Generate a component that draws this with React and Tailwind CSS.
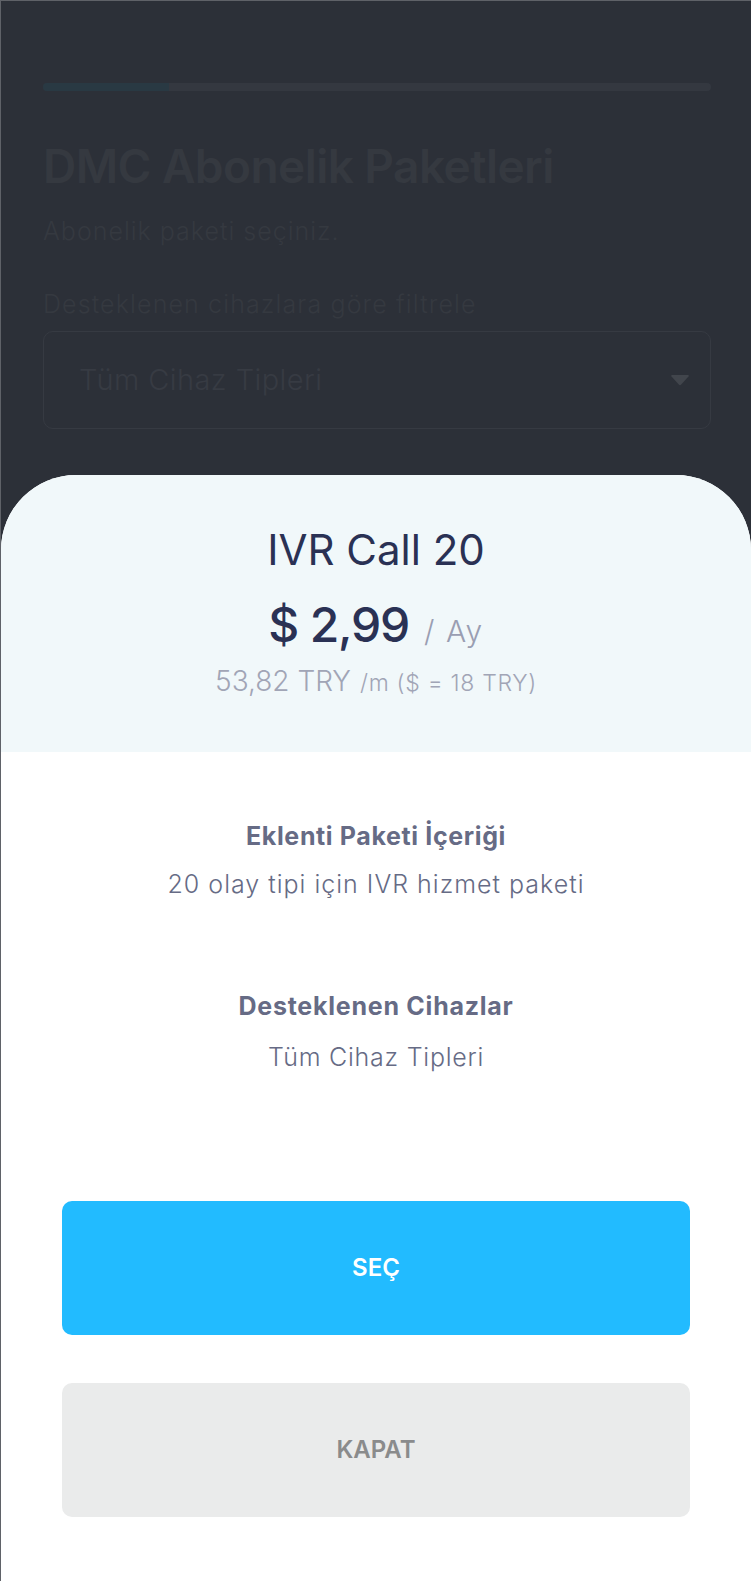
import React from 'react';

export default function App() {
  return (
    <div className="relative w-[751px] h-[1581px] overflow-hidden bg-[#2c3038] border-t border-l border-[#5f6268] font-['Inter',sans-serif]">
      {/* Background page (dimmed) */}
      <div className="px-[42px] pt-[82px]">
        <div className="h-[8px] w-[668px] rounded-full bg-[#343840] overflow-hidden">
          <div className="h-full w-[126px] bg-[#293943]" />
        </div>
        <h1 className="mt-[52px] text-[46px] leading-none font-semibold tracking-[-0.012em] text-[#353940]">DMC Abonelik Paketleri</h1>
        <p className="mt-[30px] text-[25px] leading-none font-light tracking-[0.04em] text-[#353940]">Abonelik paketi seçiniz.</p>
        <p className="mt-[48px] text-[25px] leading-none font-light tracking-[0.045em] text-[#353940]">Desteklenen cihazlara göre filtrele</p>
        <div className="mt-[14px] h-[98px] w-[668px] rounded-[10px] border border-[#363a42] flex items-center justify-between pl-[35px] pr-[20px]">
          <span className="text-[29px] font-light tracking-[0.015em] text-[#373b43]">Tüm Cihaz Tipleri</span>
          <svg width="20" height="12" viewBox="0 0 20 12">
            <path d="M2 1 L18 1 Q19.5 1 18.5 2.5 L11.2 10.5 Q10 11.8 8.8 10.5 L1.5 2.5 Q0.5 1 2 1 Z" fill="#41454c" />
          </svg>
        </div>
      </div>

      {/* Bottom sheet */}
      <div className="absolute left-0 right-0 top-[474px] bottom-0 rounded-t-[75px] overflow-hidden bg-white flex flex-col">
        <div className="h-[277px] bg-[#f1f8fa] flex flex-col items-center pt-[54px]">
          <h2 className="text-[42px] leading-none text-[#2a3154]">IVR Call 20</h2>
          <div className="mt-[30px] flex items-baseline">
            <span className="text-[48px] leading-none font-medium tracking-[-0.025em] text-[#2a3154]">$ 2,99</span>
            <span className="ml-[15px] text-[30px] leading-none font-light tracking-[0.05em] text-[#9a9eb2]">/ Ay</span>
          </div>
          <div className="mt-[18px] flex items-baseline font-light text-[#a1a5b6]">
            <span className="text-[28px] leading-none">53,82 TRY</span>
            <span className="ml-[9px] text-[23px] leading-none tracking-[0.03em]">/m ($ = 18 TRY)</span>
          </div>
        </div>

        <div className="flex flex-col items-center text-[#666b85]">
          <h3 className="mt-[72px] text-[25px] leading-none font-bold tracking-[0.025em]">Eklenti Paketi İçeriği</h3>
          <p className="mt-[23px] text-[25px] leading-none font-light tracking-[0.04em]">20 olay tipi için IVR hizmet paketi</p>
          <h3 className="mt-[97px] text-[25px] leading-none font-bold tracking-[0.03em]">Desteklenen Cihazlar</h3>
          <p className="mt-[26px] text-[25px] leading-none font-light tracking-[0.03em]">Tüm Cihaz Tipleri</p>
        </div>

        <div className="mt-auto mb-[64px] px-[61px] flex flex-col gap-[48px]">
          <button className="h-[134px] w-full rounded-[10px] bg-[#22bbff] text-white text-[24px] font-semibold">SEÇ</button>
          <button className="h-[134px] w-full rounded-[10px] bg-[#eaebeb] text-[#8a8b8c] text-[24px] font-semibold">KAPAT</button>
        </div>
      </div>
    </div>
  );
}
